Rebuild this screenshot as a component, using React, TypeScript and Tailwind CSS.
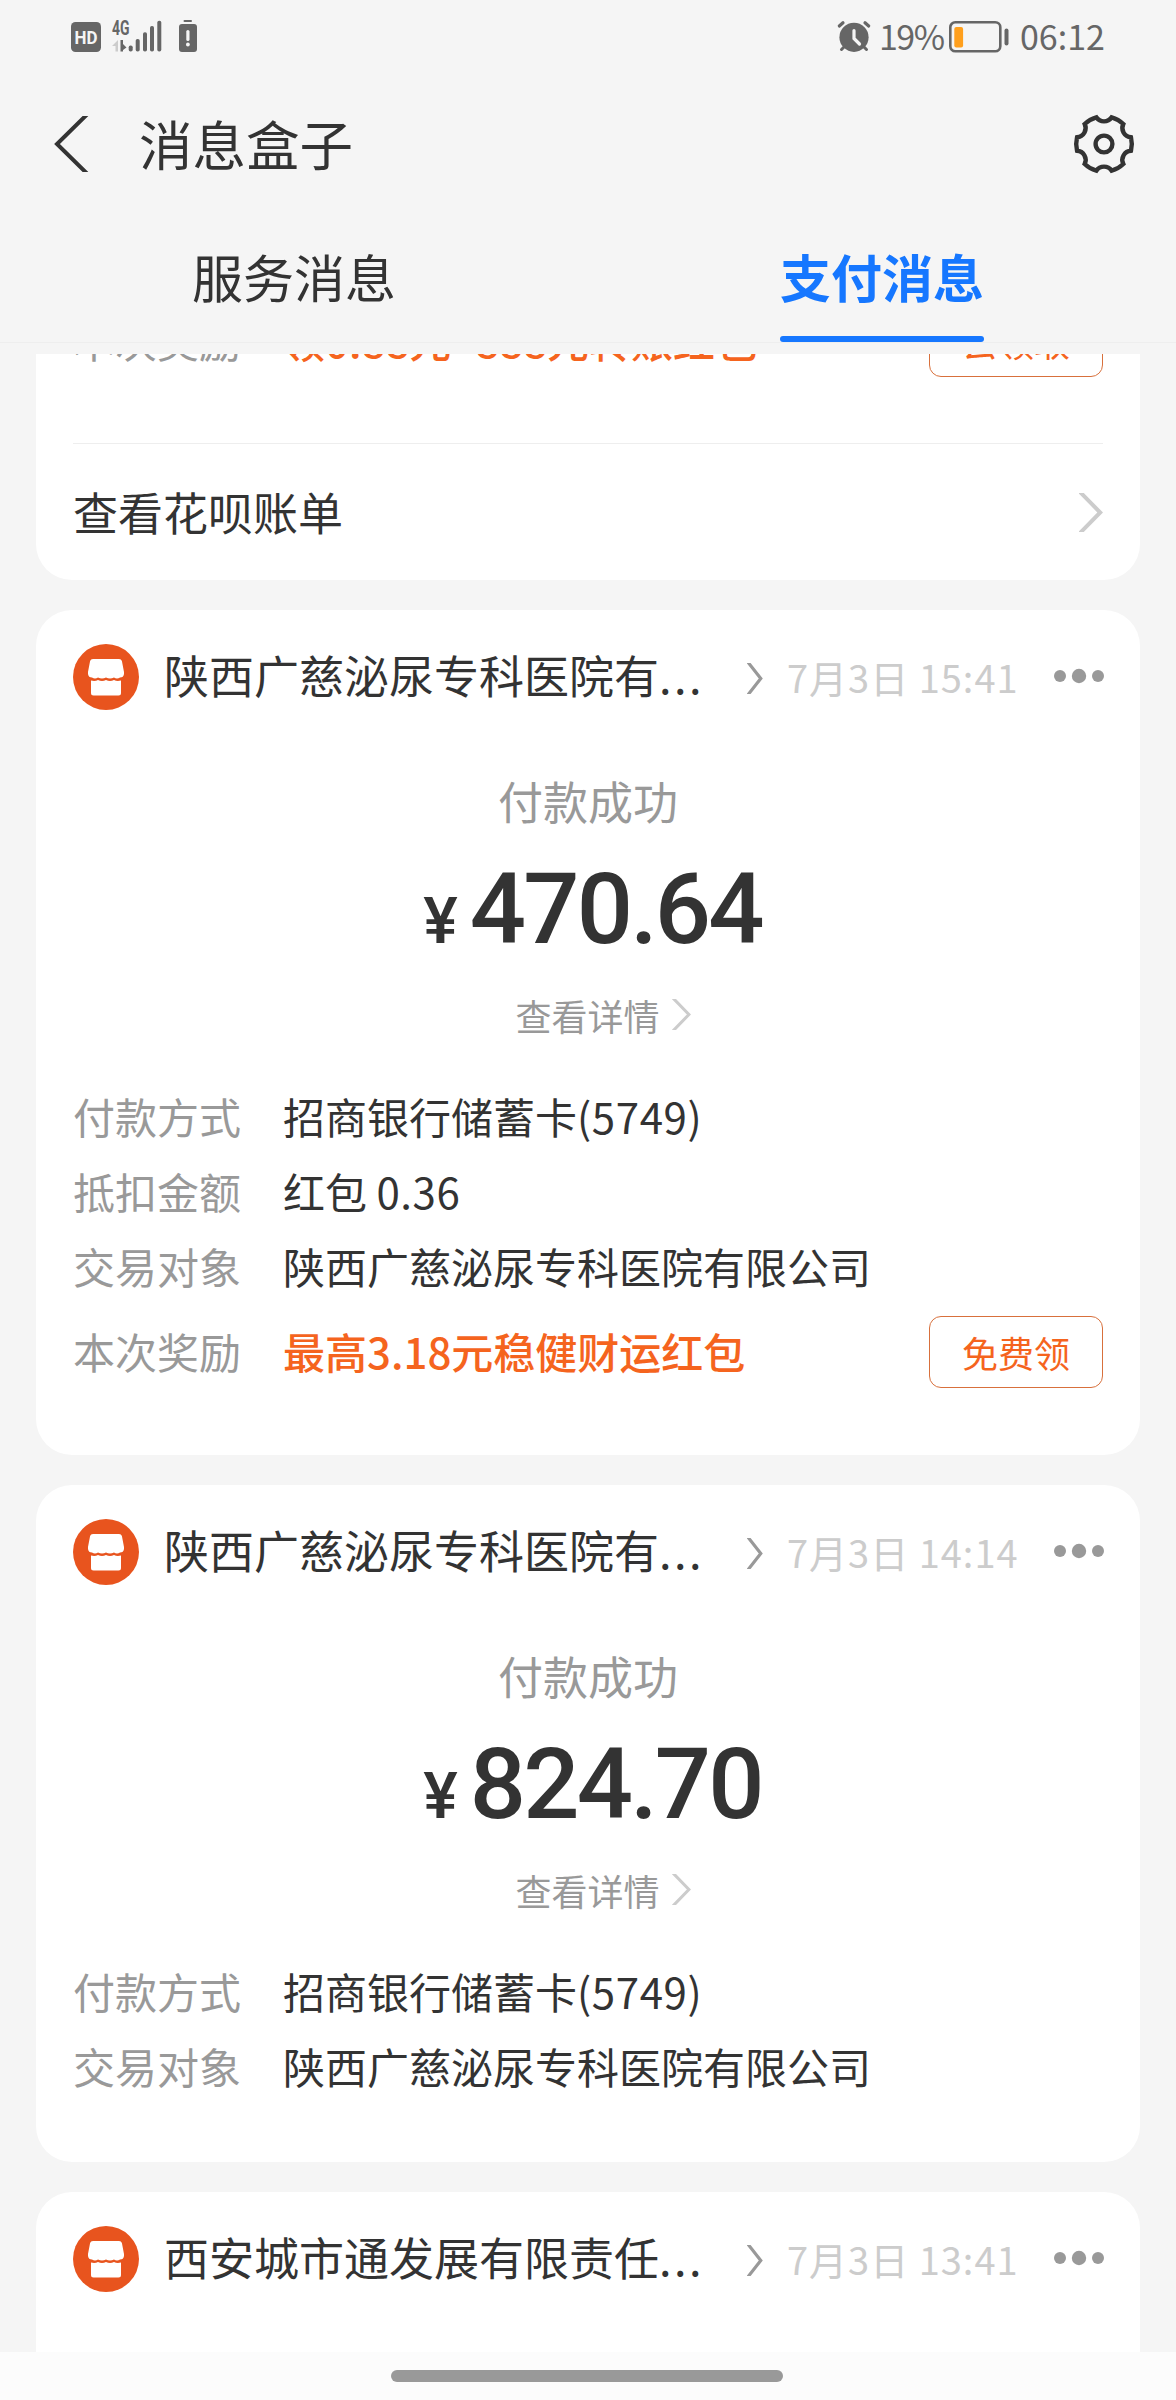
import clsx from 'clsx';

interface Field {
  label: string;
  value: string;
}

interface Reward {
  text: string;
  action: string;
}

interface Payment {
  id: number;
  merchant: string;
  time: string;
  amount?: string;
  fields?: Field[];
  reward?: Reward;
}

const payments: Payment[] = [
  {
    id: 1,
    merchant: '陕西广慈泌尿专科医院有',
    time: '7月3日 15:41',
    amount: '470.64',
    fields: [
      { label: '付款方式', value: '招商银行储蓄卡(5749)' },
      { label: '抵扣金额', value: '红包 0.36' },
      { label: '交易对象', value: '陕西广慈泌尿专科医院有限公司' },
    ],
    reward: { text: '最高3.18元稳健财运红包', action: '免费领' },
  },
  {
    id: 2,
    merchant: '陕西广慈泌尿专科医院有',
    time: '7月3日 14:14',
    amount: '824.70',
    fields: [
      { label: '付款方式', value: '招商银行储蓄卡(5749)' },
      { label: '交易对象', value: '陕西广慈泌尿专科医院有限公司' },
    ],
  },
  {
    id: 3,
    merchant: '西安城市通发展有限责任',
    time: '7月3日 13:41',
  },
];

// Six-lobed gear: convex arcs on the rim, concave arcs between the lobes
function gearPath(cx: number, cy: number, r: number) {
  const at = (deg: number) => {
    const rad = (deg * Math.PI) / 180;
    return `${(cx + r * Math.cos(rad)).toFixed(2)} ${(cy + r * Math.sin(rad)).toFixed(2)}`;
  };
  let d = `M${at(-14)}`;
  for (let i = 0; i < 6; i++) {
    const a = i * 60;
    d += `A${r} ${r} 0 0 1 ${at(a + 14)}A9.2 9.2 0 0 0 ${at(a + 46)}`;
  }
  return d + 'Z';
}

function GearIcon() {
  return (
    <svg className="-mt-[2px]" width="64" height="64" viewBox="0 0 64 64" fill="none" stroke="#333" strokeWidth="4.4">
      <path d={gearPath(32, 32, 27.8)} />
      <circle cx="32" cy="32" r="8.4" />
    </svg>
  );
}

function Chevron({ className, width, height, stroke }: { className?: string; width: number; height: number; stroke: number }) {
  return (
    <svg className={className} width={width} height={height} viewBox={`0 0 ${width} ${height}`} fill="none">
      <path
        d={`M0 -2L${width - stroke * 0.7} ${height / 2}L0 ${height + 2}`}
        stroke="currentColor"
        strokeWidth={stroke}
      />
    </svg>
  );
}

function StoreIcon() {
  return (
    <svg className="shrink-0" width="66" height="66" viewBox="0 0 66 66">
      <circle cx="33" cy="33" r="33" fill="#e8541e" />
      <path
        fill="#fff"
        d="M20 15H46Q48.300 15 48.900 17L51 28V30Q50.500 33.500 47 33.500Q44 35.500 41 33.500Q37 35.500 33 33.500Q29 35.500 25 33.500Q22 35.500 19 33.500Q15.500 33.500 15 30V28L17.100 17Q17.700 15 20 15Z"
      />
      <path
        fill="#fff"
        d="M18 36.500Q22 37.500 25 36Q29 38 33 36Q37 38 41 36Q44 37.500 48 36.500V49Q48 51.500 45.500 51.500H20.500Q18 51.500 18 49Z"
      />
    </svg>
  );
}

function StatusBar() {
  return (
    <div className="flex h-[73px] items-center justify-between pr-[72px] pl-[71px] text-[#666]">
      <svg width="130" height="40" viewBox="71 17 130 40" fill="#666">
        <rect x="71" y="22" width="30" height="30" rx="4.500" />
        <text x="86" y="44" textAnchor="middle" fontSize="19" fontWeight="700" fontFamily="Roboto, sans-serif" fill="#f5f5f5" textLength="23" lengthAdjust="spacingAndGlyphs">
          HD
        </text>
        <text x="112" y="34.500" fontSize="19.500" fontWeight="700" fontFamily="Roboto, sans-serif" textLength="17.500" lengthAdjust="spacingAndGlyphs">
          4G
        </text>
        <path fill="#ccc" d="M118 40V51.500H115.500V46H112Z" />
        <path d="M120.500 40H123V44L126.500 47.500L123 50V51.500H120.500Z" />
        <rect x="128.700" y="45.500" width="4" height="6" rx="1.800" />
        <rect x="135.700" y="39" width="4" height="12.500" rx="1.800" />
        <rect x="143" y="32.300" width="4" height="19.200" rx="1.800" />
        <rect x="150" y="26" width="4" height="25.500" rx="1.800" />
        <rect x="157.300" y="20.700" width="4" height="30.800" rx="1.800" />
        <rect x="183.500" y="20" width="8.500" height="2" rx="1" />
        <rect x="179" y="24" width="18" height="28" rx="3" />
        <path d="M187.900 31.500V39.500" stroke="#f5f5f5" strokeWidth="3.200" strokeLinecap="round" />
        <circle cx="187.900" cy="44.500" r="1.900" fill="#f5f5f5" />
      </svg>

      <div className="flex items-center">
        <svg className="-mt-[2px]" width="34" height="34" viewBox="0 0 34 34" fill="none" stroke="#666" strokeLinecap="round">
          <circle cx="17" cy="18.300" r="14.600" fill="#666" stroke="none" />
          <path d="M2.300 7L6 3.700M31.700 7L28 3.700" strokeWidth="3.200" />
          <path d="M7 28L4.500 30.500M27 28L29.500 30.500" strokeWidth="3" />
          <path d="M17 11.500V19.500L22.500 25" stroke="#f5f5f5" strokeWidth="3.200" />
        </svg>
        <span className="-mt-[2px] ml-[8px] w-[64px] text-[34px] leading-none tracking-[-1.500px]">19%</span>
        <svg className="ml-[5px]" width="62" height="34" viewBox="0 0 62 34">
          <rect x="2.300" y="2.300" width="50" height="29" rx="5" fill="none" stroke="#666" strokeWidth="2.600" />
          <rect x="6.300" y="7" width="8.800" height="20.500" rx="2" fill="#ff9f1c" />
          <rect x="56.500" y="8.500" width="4" height="17" rx="2" fill="#666" />
        </svg>
        <span className="-mt-[2px] ml-[10px] w-[84px] text-[34px] leading-none whitespace-nowrap">06:12</span>
      </div>
    </div>
  );
}

function TitleBar() {
  return (
    <div className="flex h-[143px] items-center pr-[40px] pl-[53px]">
      <svg className="-mt-[1px]" width="36" height="56" viewBox="0 0 36 56" fill="none">
        <path d="M34.500 -2L4 28L34.500 58" stroke="#333" strokeWidth="4" />
      </svg>
      <h1 className="-mt-[3px] ml-[50px] flex-1 text-[53.500px] leading-[80px]">消息盒子</h1>
      <GearIcon />
    </div>
  );
}

function Tabs() {
  const tabs = [
    { name: '服务消息', active: false },
    { name: '支付消息', active: true },
  ];
  return (
    <div className="flex h-[127px] border-b border-[#eee]">
      {tabs.map((tab) => (
        <div key={tab.name} className="flex flex-1 flex-col items-center justify-end">
          <span
            className={clsx(
              'text-[51px] leading-[76px]',
              tab.active ? 'font-bold text-[#1677ff]' : 'text-[#333]',
            )}
          >
            {tab.name}
          </span>
          <span className={clsx('mt-[22px] h-[6px] w-[204px] rounded-full', tab.active && 'bg-[#1677ff]')} />
        </div>
      ))}
    </div>
  );
}

function RewardRow({ text, action }: Reward) {
  return (
    <div className="flex h-[75px] items-center text-[42px]">
      <span className="-mt-[2px] w-[210px] text-[#999]">本次奖励</span>
      <span className="-mt-[2px] flex-1 font-medium whitespace-nowrap text-[#f5641e]">{text}</span>
      <button className="h-[72px] w-[174px] rounded-[12px] border border-[#d8703c] text-[36px] leading-none text-[#f5641e]">
        {action}
      </button>
    </div>
  );
}

function PaymentCard({ payment }: { payment: Payment }) {
  return (
    <section
      className={clsx(
        'shrink-0 rounded-[36px] bg-white px-[37px] pt-[34px] pb-[58px]',
        !payment.amount && 'h-[677px]',
      )}
    >
      <header className="flex h-[66px] items-center">
        <StoreIcon />
        <h2 className="-mt-[4px] ml-[25px] w-[583px] text-[45px] leading-[66px] whitespace-nowrap">
          {payment.merchant}
          <span className="tracking-[2.500px]">...</span>
        </h2>
        <Chevron className="mt-[3px] text-[#999]" width={16} height={31} stroke={3.2} />
        <span className="ml-[24px] w-[240px] text-[38px] leading-[66px] tracking-[1px] whitespace-nowrap text-[#ccc]">
          {payment.time}
        </span>
        <svg className="-mt-[2px] -mr-[1px] ml-auto" width="50" height="16" viewBox="0 0 50 16" fill="#999">
          <circle cx="6" cy="8" r="6" />
          <circle cx="25" cy="8" r="7.200" />
          <circle cx="44" cy="8" r="6" />
        </svg>
      </header>

      {payment.amount && (
        <>
          <p className="mt-[61px] text-center text-[45px] leading-[60px] text-[#999]">付款成功</p>
          <p className="mt-[27px] flex h-[100px] items-baseline justify-center pl-[9px] font-[Roboto,sans-serif] font-medium">
            <span className="mr-[12px] text-[65px] leading-none font-medium">¥</span>
            <span className="text-[99px] leading-[102px] tracking-[-2.800px]">{payment.amount}</span>
          </p>
          <p className="mt-[32px] flex h-[50px] items-center justify-center pl-[30px] text-[36px] leading-[50px] text-[#999]">
            查看详情
            <Chevron className="-mt-[2px] ml-[12px] text-[#ccc]" width={19} height={31} stroke={3} />
          </p>
        </>
      )}

      {payment.fields && (
        <dl className="mt-[38px] pb-[1px] text-[42px] leading-[75px]">
          {payment.fields.map((field) => (
            <div key={field.label} className="flex">
              <dt className="w-[210px] text-[#999]">{field.label}</dt>
              <dd className="whitespace-nowrap">
                {/* digits run slightly wider than the Chinese text */}
                {field.value.split(/([\d().]+)/).map((part, i) => (
                  <span key={i} className={clsx(i % 2 === 1 && 'tracking-[0.600px]')}>
                    {part}
                  </span>
                ))}
              </dd>
            </div>
          ))}
        </dl>
      )}

      {payment.reward && (
        <div className="mt-[10px] mb-[8px]">
          <RewardRow {...payment.reward} />
        </div>
      )}
    </section>
  );
}

export default function App() {
  return (
    <div
      lang="zh-CN"
      className="flex h-[2400px] w-[1176px] flex-col overflow-hidden bg-[#f5f5f5] font-['Noto_Sans_CJK_SC',sans-serif] text-[#333]"
    >
      <StatusBar />
      <TitleBar />
      <Tabs />

      <main className="mt-[11px] flex h-[1998px] flex-col gap-[30px] overflow-hidden px-[36px]">
        {/* scrolled card, only its lower part is visible */}
        <section className="h-[226px] shrink-0 overflow-hidden rounded-b-[36px] bg-white px-[37px]">
          <div className="-mt-[51px] border-b border-[#eee] pb-[65px]">
            <RewardRow text="领0.88元~888元转账红包" action="去领取" />
          </div>
          <div className="flex h-[136px] items-center justify-between text-[45px]">
            <span>查看花呗账单</span>
            <Chevron className="text-[#ccc]" width={24} height={39} stroke={4} />
          </div>
        </section>

        {payments.map((payment) => (
          <PaymentCard key={payment.id} payment={payment} />
        ))}
      </main>

      <footer className="flex h-[48px] items-center justify-center bg-[#fcfcfc]">
        <div className="-ml-[2px] h-[12px] w-[392px] rounded-full bg-[#999]" />
      </footer>
    </div>
  );
}
